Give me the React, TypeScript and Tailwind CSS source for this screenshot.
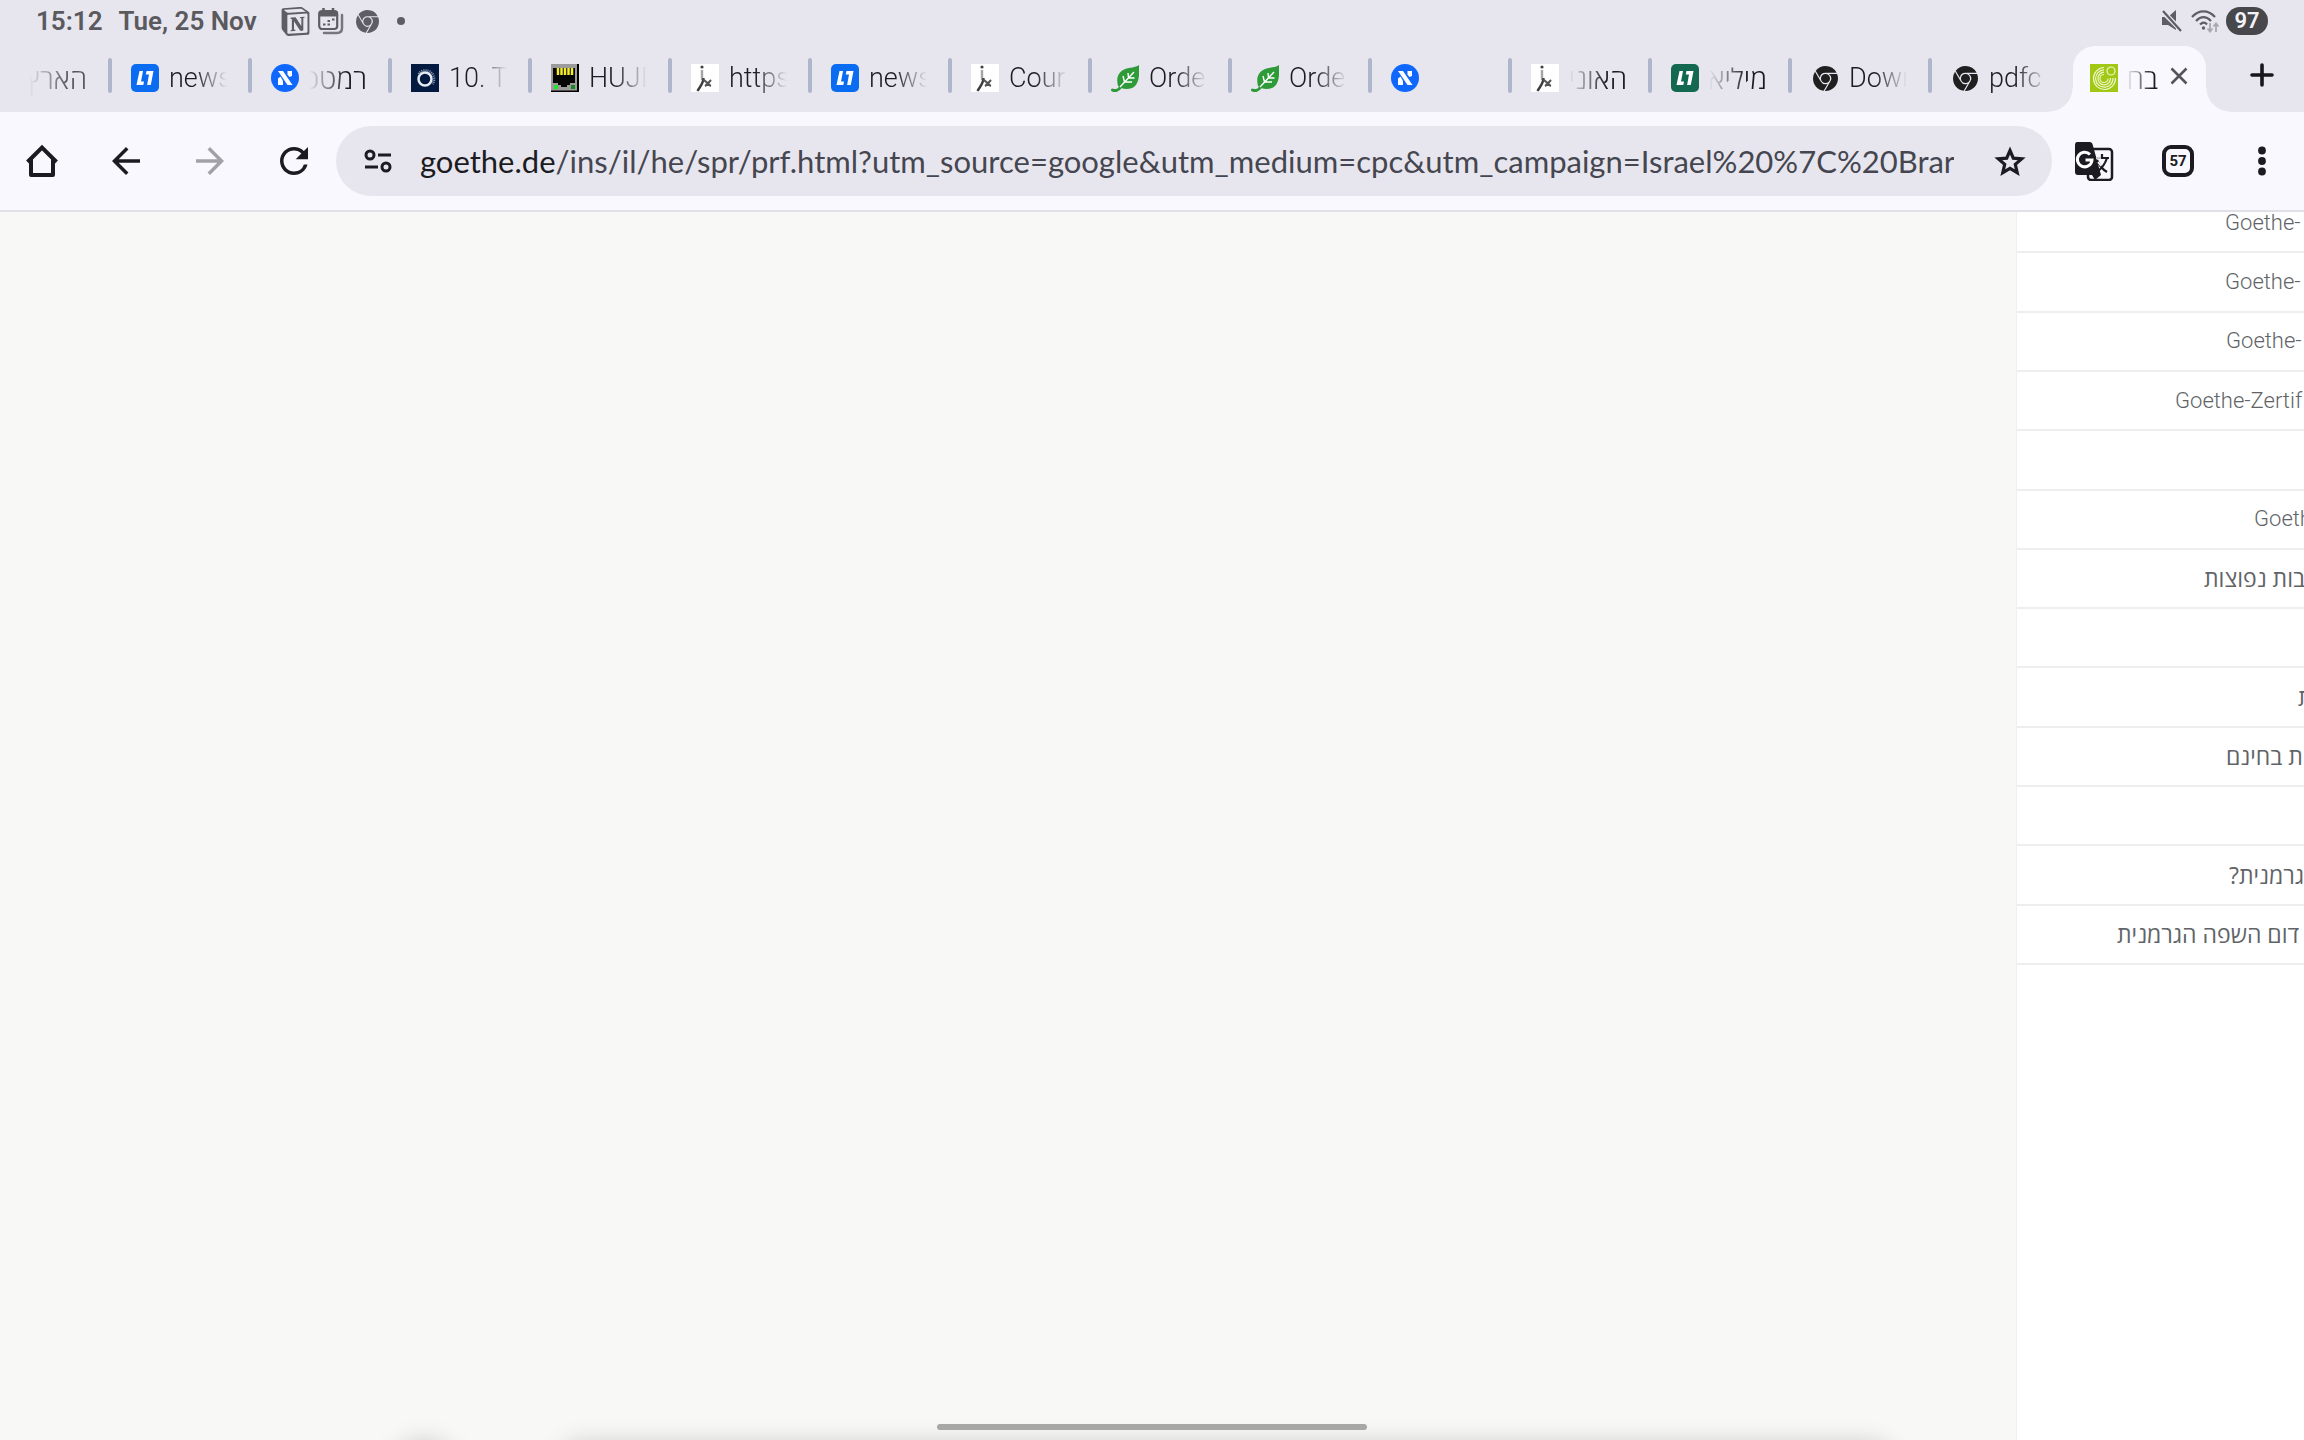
import React, { useState } from 'react';
import { MdArrowBack, MdArrowForward, MdRefresh } from 'react-icons/md';
import { SiGooglechrome, SiNotion } from 'react-icons/si';
import clsx from 'clsx';

type Tab = { icon: string; title: string; rtl?: boolean };

const tabs: Tab[] = [
  { icon: 'none', title: 'הארץ', rtl: true },
  { icon: 'news', title: 'news' },
  { icon: 'alef', title: 'רמטכ', rtl: true },
  { icon: 'ring', title: '10. T' },
  { icon: 'port', title: 'HUJI' },
  { icon: 'figure', title: 'https' },
  { icon: 'news', title: 'news' },
  { icon: 'figure', title: 'Cour' },
  { icon: 'leaf', title: 'Orde' },
  { icon: 'leaf', title: 'Orde' },
  { icon: 'alef', title: '' },
  { icon: 'figure', title: 'האוני', rtl: true },
  { icon: 'market', title: 'מיליא', rtl: true },
  { icon: 'chrome', title: 'Down' },
  { icon: 'chrome', title: 'pdfc' },
];

// rows run past the right edge, so each one has its own indent
const menuRows = [
  { text: 'Goethe-', indent: 'pl-[208px]' },
  { text: 'Goethe-', indent: 'pl-[208px]' },
  { text: 'Goethe-', indent: 'pl-[209px]' },
  { text: 'Goethe-Zertif', indent: 'pl-[158px]' },
  { text: '', indent: '' },
  { text: 'Goeth', indent: 'pl-[237px]' },
  { text: 'בות נפוצות', indent: 'pl-[187px]', rtl: true },
  { text: '', indent: '' },
  { text: 'ת', indent: 'pl-[281px]', rtl: true },
  { text: 'ת בחינם', indent: 'pl-[209px]', rtl: true },
  { text: '', indent: '' },
  { text: 'גרמנית?', indent: 'pl-[212px]', rtl: true },
  { text: 'דום השפה הגרמנית', indent: 'pl-[100px]', rtl: true },
];

const BlockMark = ({ color }: { color: string }) => (
  <svg viewBox="0 0 28 28" className="size-7 shrink-0">
    <rect width="28" height="28" rx="5" fill={color} />
    <path d="M8.500 7H12l-2 10.500h3l-.7 3.500H5.500z" fill="#fff" />
    <path d="M15.500 7h7l-2.700 14h-3.700L18 10.500h-3.200z" fill="#fff" />
  </svg>
);

const Favicon = ({ name }: { name: string }) => {
  switch (name) {
    case 'news':
      return <BlockMark color="#0a6cf0" />;
    case 'market':
      return <BlockMark color="#13694f" />;
    case 'alef':
      return (
        <svg viewBox="0 0 28 28" className="size-7 shrink-0">
          <circle cx="14" cy="14" r="14" fill="#0f68fb" />
          <path d="M7 7h5l9.500 14h-5z" fill="#fff" />
          <path d="M16.500 7h4.500v5l-2.500 1-2-2.500z" fill="#fff" />
          <path d="M7 21v-6.500l2.500-2 2.500 4.500v4z" fill="#fff" />
        </svg>
      );
    case 'ring':
      return (
        <svg viewBox="0 0 28 28" className="size-7 shrink-0">
          <rect width="28" height="28" fill="#021a40" />
          <circle cx="14" cy="15" r="6.500" fill="none" stroke="#e6ecf3" strokeWidth="2.500" />
          <path d="M7.500 10a8.500 8.500 0 0 1 14 10" fill="none" stroke="#8fa0b8" strokeWidth="2.500" strokeDasharray="1 1" />
        </svg>
      );
    case 'port':
      return (
        <svg viewBox="0 0 28 28" className="size-7 shrink-0">
          <rect width="28" height="28" fill="#000" />
          <rect width="26" height="26.500" fill="#9b9b9b" />
          <path d="M2 4h22v15h-5v2h-3v2h-6v-2H7v-2H2z" fill="#050505" />
          <path d="M7 4v7M10.500 4v7M14 4v7M17.500 4v7M21 4v7" stroke="#f4ec2a" strokeWidth="2.500" />
          <rect x="3" y="21" width="4" height="4" fill="#27e02c" />
          <rect x="20" y="21" width="4" height="4" fill="#168a1c" />
        </svg>
      );
    case 'figure':
      return (
        <svg viewBox="0 0 28 28" className="size-7 shrink-0">
          <rect width="28" height="28" fill="#fff" />
          <circle cx="11" cy="3" r="1.600" fill="#444" />
          <path d="M11 6v10" stroke="#a5a5a5" strokeWidth="2.400" />
          <path d="M12.500 14c0 5-3 8-6 13" stroke="#3c3c3c" strokeWidth="2.400" fill="none" />
          <path d="M12 16c3 0 5 5 8 6M14 22c2-1 4-4 6-6" stroke="#555" strokeWidth="2.200" fill="none" />
        </svg>
      );
    case 'leaf':
      return (
        <svg viewBox="0 0 28 28" className="size-7 shrink-0">
          <path d="M28 1c.5 9 .5 20-7 23-5 2-11 1-14-2-2-8 0-14 7-17 5-2 10-1 14-4z" fill="#2e9a38" />
          <path d="M1.500 26c4 2 7-1 9-4" fill="none" stroke="#2e9a38" strokeWidth="3" strokeLinecap="round" />
          <path d="M9 23L23 8M13.500 18l-1.500-6M17.500 14L17 9M13.500 18h7.500M17.500 14h6" stroke="#fff" strokeWidth="1.400" fill="none" />
        </svg>
      );
    case 'chrome':
      return (
        <span className="flex size-7 shrink-0 items-center justify-center text-[#1f1f1f]">
          <SiGooglechrome size={25} />
        </span>
      );
    case 'goethe':
      return (
        <svg viewBox="0 0 28 28" className="size-7 shrink-0">
          <rect width="28" height="28" fill="#a0c814" />
          <g fill="none" stroke="#f0f6c8" strokeWidth="1.200">
            <circle cx="21" cy="7" r="4" />
            <path d="M14 3.500A11 11 0 1 0 25.500 14" />
            <path d="M14 5.800A8.700 8.700 0 1 0 23 14" />
            <path d="M14 8.200A6.300 6.300 0 1 0 20.500 14" />
            <path d="M14 10.500A4 4 0 1 0 18 14.500" />
          </g>
        </svg>
      );
    default:
      return <span className="size-7 shrink-0" />;
  }
};

const CalendarIcon = () => (
  <svg viewBox="0 0 26 28" className="h-7 w-[26px]" fill="none" stroke="#5e5d63">
    <rect x="1.200" y="4" width="18" height="18" rx="3" strokeWidth="2.200" />
    <path d="M1 4.500h18.500v5H1z" fill="#5e5d63" stroke="none" />
    <path d="M5.500 1v4M15 1v4" strokeWidth="2.500" />
    <path d="M9.500 14h2.500M14 12.500h2.500M5 17.500h2.500M9.500 17.500h2.500" strokeWidth="2.200" />
    <path d="M24 8v13c0 3-1.500 5-5 5H6" strokeWidth="2.500" stroke="#77767c" strokeLinecap="round" />
  </svg>
);

const StatusBar = () => (
  <div className="flex h-[46px] shrink-0 items-center pt-1 pb-2 pr-9 pl-9 font-[Roboto,sans-serif] text-[26px] leading-8 font-semibold text-[#5a595e]">
    <span>15:12</span>
    <span className="ml-4">Tue, 25 Nov</span>
    <div className="ml-6 flex items-center gap-2 text-[#5e5d63]">
      <SiNotion size={29} />
      <CalendarIcon />
      <SiGooglechrome size={23} className="ml-1" />
      <span className="ml-[10px] size-2 rounded-full bg-[#5e5d63]" />
    </div>
    <div className="ml-auto flex items-center">
      <svg viewBox="0 0 22 22" className="size-[22px]">
        <path d="M1 7h6l8-7v20l-8-5H1z" fill="#5e5d63" />
        <path d="M0 0l22 22" stroke="#e7e6ef" strokeWidth="5" />
        <path d="M2 1l18 20" stroke="#5e5d63" strokeWidth="2.200" />
      </svg>
      <svg viewBox="0 0 30 24" className="ml-[7px] h-6 w-[30px]" fill="none" stroke="#5e5d63" strokeWidth="2.200">
        <path d="M2 8C9 .5 18 .5 25 8M6 12c5-5 10-5 15 0M10 15.500c2.500-2.500 5-2.500 7 0" />
        <circle cx="13.500" cy="19" r="1.700" fill="#5e5d63" stroke="none" />
        <path d="M20 14v8M17.500 19.500l2.500 3 2.500-3M26 23v-8M23.500 17.500l2.500-3 2.500 3" stroke="#a9a8af" strokeWidth="1.800" />
      </svg>
      <span className="ml-[6px] flex h-7 w-[42px] items-center justify-center rounded-full bg-[#48474b] text-[22px] leading-7 text-[#f4f3f8]">97</span>
    </div>
  </div>
);

const TabStrip = () => {
  const [closed, setClosed] = useState(false);
  return (
    <div className="flex h-[66px] shrink-0 overflow-hidden">
      <div className="-ml-7 flex">
        {tabs.map((tab, i) => (
          <button key={i} className="flex w-[140px] shrink-0 items-center pb-[2px] pl-[19px] text-left">
            <Favicon name={tab.icon} />
            <span
              dir={tab.rtl ? 'rtl' : 'ltr'}
              className={clsx(
                'ml-[10px] block w-[58px] overflow-hidden leading-9 whitespace-nowrap text-[#1b1b21]',
                tab.rtl
                  ? 'font-["Open_Sans",sans-serif] text-[28px] font-light [mask-image:linear-gradient(to_left,black_35%,transparent)]'
                  : 'font-[Roboto,sans-serif] text-[27px] font-light [mask-image:linear-gradient(to_right,black_45%,transparent)]',
                i === 0 && 'opacity-70'
              )}
            >
              {tab.title}
            </span>
            {i < tabs.length - 1 && <span className="mb-[5px] ml-[21px] h-[35px] w-1 shrink-0 rounded-full bg-[#b0b5ce]" />}
          </button>
        ))}
      </div>
      {!closed && (
        <div className="relative ml-px flex w-[133px] shrink-0 items-center rounded-t-[22px] bg-[#f9f8ff] pr-[18px] pb-[2px] pl-[17px]">
          <span className="absolute bottom-0 -left-6 size-6 bg-[radial-gradient(circle_at_0_0,transparent_23px,#f9f8ff_24px)]" />
          <span className="absolute -right-6 bottom-0 size-6 bg-[radial-gradient(circle_at_100%_0,transparent_23px,#f9f8ff_24px)]" />
          <Favicon name="goethe" />
          <span dir="rtl" className='ml-2 block w-8 overflow-hidden font-["Open_Sans",sans-serif] text-[28px] leading-9 font-light whitespace-nowrap text-[#1b1b21] [mask-image:linear-gradient(to_left,black_20%,transparent)]'>
            בח
          </span>
          <button aria-label="Close tab" onClick={() => setClosed(true)} className="mb-1 ml-auto">
            <svg viewBox="0 0 18 18" className="size-[18px]">
              <path d="M1.500 1.500l15 15M16.500 1.500l-15 15" stroke="#55545b" strokeWidth="2.600" />
            </svg>
          </button>
        </div>
      )}
      <button aria-label="New tab" className="mr-[30px] mb-2 ml-auto">
        <svg viewBox="0 0 24 24" className="size-6">
          <path d="M12 2v20M2 12h20" stroke="#16161b" strokeWidth="3.600" strokeLinecap="round" />
        </svg>
      </button>
    </div>
  );
};

const ToolButton = ({ label, children, dim }: { label: string; children: React.ReactNode; dim?: boolean }) => (
  <button aria-label={label} className={clsx('flex h-[70px] w-[84px] shrink-0 items-center justify-center', dim ? 'text-[#a2a1a8]' : 'text-[#1b1b21]')}>
    {children}
  </button>
);

const Toolbar = () => (
  <div className="flex h-[100px] shrink-0 items-center border-b-2 border-[#e1e0e9] bg-[#f9f8ff]">
    <ToolButton label="Home">
      <svg viewBox="0 0 36 36" className="size-9" fill="none" stroke="currentColor" strokeWidth="4" strokeLinejoin="round">
        <path d="M3.500 19L18 4.500 32.500 19" strokeLinejoin="miter" />
        <path d="M7 16v16h22V16" />
      </svg>
    </ToolButton>
    <ToolButton label="Back">
      <MdArrowBack size={42} />
    </ToolButton>
    <ToolButton label="Forward" dim>
      <MdArrowForward size={42} />
    </ToolButton>
    <ToolButton label="Reload">
      <MdRefresh size={42} />
    </ToolButton>
    <div className="flex h-[70px] min-w-0 flex-1 items-center rounded-full bg-[#e7e6ef]">
      <button aria-label="Site settings" className="flex h-[70px] w-[84px] shrink-0 items-center justify-center">
        <svg viewBox="0 0 28 24" className="h-6 w-7" fill="none" stroke="#1b1b21" strokeWidth="3">
          <circle cx="6" cy="6" r="4" />
          <circle cx="22" cy="18" r="4" />
          <path d="M14 6h13M1 18h13" />
        </svg>
      </button>
      <div className="min-w-0 flex-1 overflow-hidden font-[Lato,sans-serif] text-[31px] leading-10 whitespace-nowrap text-[#45464f]">
        <span className="text-[#1b1b21]">goethe.de</span>
        /ins/il/he/spr/prf.html?utm_source=google&utm_medium=cpc&utm_campaign=Israel%20%7C%20Brar
      </div>
      <button aria-label="Bookmark" className="ml-[14px] flex h-[70px] w-[84px] shrink-0 items-center justify-center text-[#1b1b21]">
        <svg viewBox="0 0 32 32" className="size-8" fill="none" stroke="currentColor" strokeWidth="3.200">
          <path d="M16 5.500l3.300 7.700 8.400.7-6.400 5.500 1.900 8.200L16 23.300l-7.200 4.300 1.900-8.200-6.400-5.500 8.400-.7z" />
        </svg>
      </button>
    </div>
    <ToolButton label="Translate">
      <svg viewBox="0 0 40 40" className="size-10">
        <rect x="14" y="8" width="24" height="31" rx="3" fill="#f9f8ff" stroke="#1b1b21" strokeWidth="2.500" />
        <path d="M21 17h14M28 13v4M33 17c-2 6-5 10-9 13M23 19c2 5 5 9 10 12" fill="none" stroke="#1b1b21" strokeWidth="2.200" />
        <path d="M3 1h13c1 0 2 1 2.500 2L27 34l-6 5-3-5H4c-2 0-3-1-3-3V4c0-2 1-3 2-3z" fill="#1b1b21" />
        <path d="M16 13.500A7.300 7.300 0 1 0 18 19h-6.500" fill="none" stroke="#fff" strokeWidth="3" />
        <path d="M22 17h5M24 21l3 4" stroke="#fff" strokeWidth="1.500" />
      </svg>
    </ToolButton>
    <ToolButton label="Open tabs">
      <span className="flex size-8 items-center justify-center rounded-[9px] border-4 border-[#1b1b21] font-[Roboto,sans-serif] text-[15px] leading-5 font-bold">57</span>
    </ToolButton>
    <ToolButton label="More">
      <svg viewBox="0 0 8 30" className="h-[30px] w-2" fill="currentColor">
        <circle cx="4" cy="4.500" r="3.900" />
        <circle cx="4" cy="15" r="3.900" />
        <circle cx="4" cy="25.500" r="3.900" />
      </svg>
    </ToolButton>
  </div>
);

const Page = () => (
  <main className="relative flex min-h-0 flex-1 overflow-hidden bg-[#f8f8f6]">
    <nav className="ml-auto w-[288px] shrink-0 overflow-hidden border-l border-[#f0f0ef] bg-white">
      <ul className="-mt-[18px] grid h-[771px] auto-rows-fr">
        {menuRows.map((row, i) => (
          <li key={i} className={clsx('flex items-center border-b-2 border-[#eeeeef] whitespace-nowrap', row.indent)}>
            {row.text && (
              <a
                href="#"
                dir={row.rtl ? 'rtl' : 'ltr'}
                className={clsx(
                  'leading-8 text-[#5f6468]',
                  row.rtl ? 'font-["Open_Sans",sans-serif] text-[23px]' : 'font-[Roboto,sans-serif] text-[22px] font-light'
                )}
              >
                {row.text}
              </a>
            )}
          </li>
        ))}
      </ul>
    </nav>
    {/* floating toolbar peeking in from below the screen */}
    <div className="absolute top-full right-0 left-0 flex justify-center gap-[102px] pt-1 pr-[18px]">
      <span className="size-16 rounded-full shadow-[0_0_26px_rgba(0,0,0,0.25)]" />
      <span className="h-16 w-[1336px] rounded-[24px] shadow-[0_0_26px_rgba(0,0,0,0.2)]" />
    </div>
    <span className="absolute bottom-[10px] left-1/2 h-[6px] w-[430px] -translate-x-1/2 rounded-full bg-[#a7a7a5]" />
  </main>
);

export default function App() {
  return (
    <div className="flex h-screen flex-col overflow-hidden bg-[#e7e6ef]">
      <StatusBar />
      <TabStrip />
      <Toolbar />
      <Page />
    </div>
  );
}
